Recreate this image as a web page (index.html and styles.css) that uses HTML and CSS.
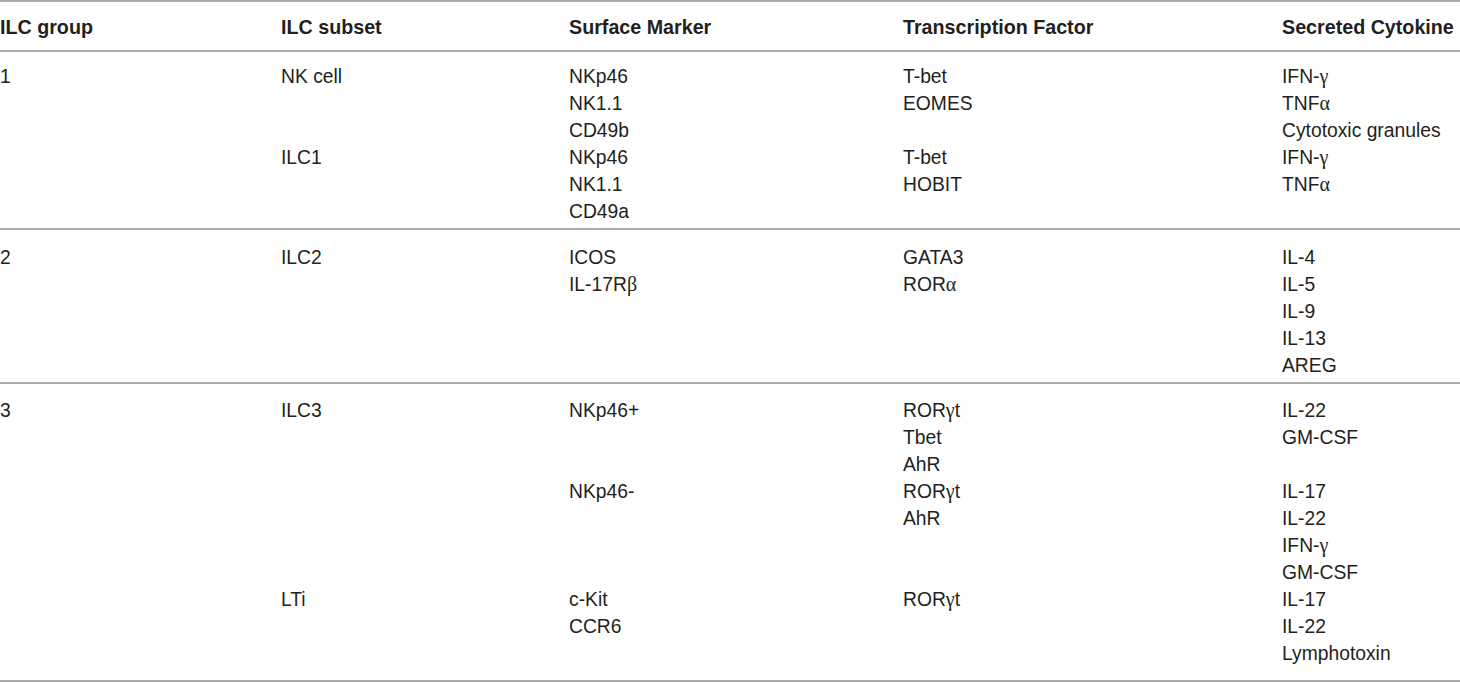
FILE: index.html
```html
<!DOCTYPE html>
<html>
<head>
<meta charset="utf-8">
<link rel="stylesheet" href="styles.css">
</head>
<body>
<table class="ilc">
  <colgroup>
    <col class="c1"><col class="c2"><col class="c3"><col class="c4"><col class="c5">
  </colgroup>
  <thead>
    <tr>
      <th>ILC group</th>
      <th>ILC subset</th>
      <th>Surface Marker</th>
      <th>Transcription Factor</th>
      <th>Secreted Cytokine</th>
    </tr>
  </thead>
  <tbody class="g1">
    <tr class="first">
      <td>1</td>
      <td>NK cell</td>
      <td><div>NKp46</div><div>NK1.1</div><div>CD49b</div></td>
      <td><div>T-bet</div><div>EOMES</div></td>
      <td><div>IFN-<span class="gk">γ</span></div><div>TNF<span class="gk">α</span></div><div>Cytotoxic granules</div></td>
    </tr>
    <tr class="last">
      <td></td>
      <td>ILC1</td>
      <td><div>NKp46</div><div>NK1.1</div><div>CD49a</div></td>
      <td><div>T-bet</div><div>HOBIT</div></td>
      <td><div>IFN-<span class="gk">γ</span></div><div>TNF<span class="gk">α</span></div></td>
    </tr>
  </tbody>
  <tbody class="g2">
    <tr class="first last">
      <td>2</td>
      <td>ILC2</td>
      <td><div>ICOS</div><div>IL-17R<span class="gk">β</span></div></td>
      <td><div>GATA3</div><div>ROR<span class="gk">α</span></div></td>
      <td><div>IL-4</div><div>IL-5</div><div>IL-9</div><div>IL-13</div><div>AREG</div></td>
    </tr>
  </tbody>
  <tbody class="g3">
    <tr class="first">
      <td>3</td>
      <td>ILC3</td>
      <td>NKp46+</td>
      <td><div>ROR<span class="gk">γ</span>t</div><div>Tbet</div><div>AhR</div></td>
      <td><div>IL-22</div><div>GM-CSF</div></td>
    </tr>
    <tr>
      <td></td>
      <td></td>
      <td>NKp46-</td>
      <td><div>ROR<span class="gk">γ</span>t</div><div>AhR</div></td>
      <td><div>IL-17</div><div>IL-22</div><div>IFN-<span class="gk">γ</span></div><div>GM-CSF</div></td>
    </tr>
    <tr class="last">
      <td></td>
      <td>LTi</td>
      <td><div>c-Kit</div><div>CCR6</div></td>
      <td><div>ROR<span class="gk">γ</span>t</div></td>
      <td><div>IL-17</div><div>IL-22</div><div>Lymphotoxin</div></td>
    </tr>
  </tbody>
</table>
</body>
</html>
```

FILE: styles.css
```css
html, body {
  margin: 0;
  padding: 0;
  background: #ffffff;
}

.ilc {
  width: 1460px;
  border-collapse: collapse;
  table-layout: fixed;
  font-family: "Liberation Sans", Arial, sans-serif;
  font-size: 19.3px;
  line-height: 27px;
  color: #231f20;
}

.c1 { width: 281px; }
.c2 { width: 288px; }
.c3 { width: 334px; }
.c4 { width: 379px; }
.c5 { width: 178px; }

.ilc th,
.ilc td {
  padding: 0;
  text-align: left;
  vertical-align: top;
  white-space: nowrap;
}

.ilc th {
  font-size: 19.7px;
  font-weight: bold;
  padding-top: 12px;
  padding-bottom: 9px;
}

.ilc thead tr {
  border-top: 2px solid #a9a9a9;
  border-bottom: 2px solid #a9a9a9;
}

.ilc tbody {
  border-bottom: 2px solid #a9a9a9;
}

.g1 .first td { padding-top: 10.5px; }
.g1 .last td { padding-bottom: 3.5px; }
.g2 .first td { padding-top: 13.5px; }
.g2 .last td { padding-bottom: 3.5px; }
.g3 .first td { padding-top: 12.5px; }
.g3 .last td { padding-bottom: 13.5px; }

.gk {
  font-family: "Liberation Serif", "DejaVu Serif", serif;
  font-size: 20px;
}
```
